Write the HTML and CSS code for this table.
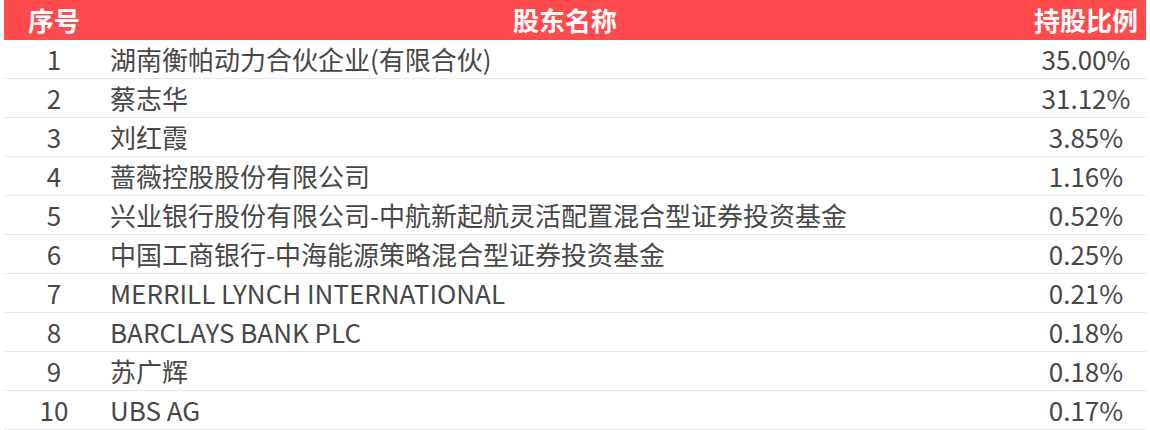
FILE: index.html
```html
<!DOCTYPE html>
<html lang="zh-CN">
<head>
<meta charset="utf-8">
<title>股东名称</title>
<link rel="stylesheet" href="styles.css">
</head>
<body>
<div class="table">
  <div class="row head">
    <div class="c-no">序号</div>
    <div class="c-name">股东名称</div>
    <div class="c-pct">持股比例</div>
  </div>
  <div class="row"><div class="c-no">1</div><div class="c-name">湖南衡帕动力合伙企业(有限合伙)</div><div class="c-pct">35.00%</div></div>
  <div class="row"><div class="c-no">2</div><div class="c-name">蔡志华</div><div class="c-pct">31.12%</div></div>
  <div class="row"><div class="c-no">3</div><div class="c-name">刘红霞</div><div class="c-pct">3.85%</div></div>
  <div class="row"><div class="c-no">4</div><div class="c-name">蔷薇控股股份有限公司</div><div class="c-pct">1.16%</div></div>
  <div class="row"><div class="c-no">5</div><div class="c-name">兴业银行股份有限公司-中航新起航灵活配置混合型证券投资基金</div><div class="c-pct">0.52%</div></div>
  <div class="row"><div class="c-no">6</div><div class="c-name">中国工商银行-中海能源策略混合型证券投资基金</div><div class="c-pct">0.25%</div></div>
  <div class="row"><div class="c-no">7</div><div class="c-name">MERRILL LYNCH INTERNATIONAL</div><div class="c-pct">0.21%</div></div>
  <div class="row"><div class="c-no">8</div><div class="c-name">BARCLAYS BANK PLC</div><div class="c-pct">0.18%</div></div>
  <div class="row"><div class="c-no">9</div><div class="c-name">苏广辉</div><div class="c-pct">0.18%</div></div>
  <div class="row"><div class="c-no">10</div><div class="c-name">UBS AG</div><div class="c-pct">0.17%</div></div>
</div>
</body>
</html>
```
FILE: styles.css
```css
html, body {
  margin: 0;
  padding: 0;
  background: #ffffff;
}
body {
  padding: 0 4px;
  font-family: "Noto Sans CJK SC", "Noto Sans", sans-serif;
  color: #474747;
}
.table {
  display: flex;
  flex-direction: column;
}
.row {
  display: grid;
  grid-template-columns: 100px 1fr 120px;
  align-items: center;
  height: 38px;
  border-bottom: 1px solid #e8e8f0;
  font-size: 26px;
  line-height: 1;
}
.row.head {
  height: 40px;
  border-bottom: none;
  background: #ff4b4e;
  color: #ffffff;
  font-weight: 700;
}
.c-no {
  text-align: center;
}
.c-name {
  padding-left: 6px;
  white-space: nowrap;
}
.head .c-name {
  text-align: center;
  padding-left: 0;
}
.c-pct {
  text-align: center;
}
```
